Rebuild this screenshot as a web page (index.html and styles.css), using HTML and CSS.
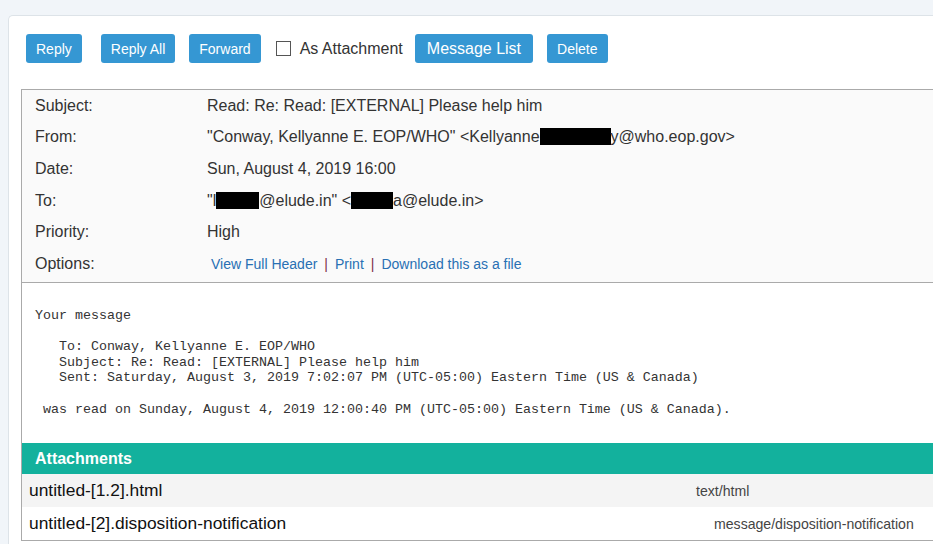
FILE: index.html
```html
<!DOCTYPE html>
<html lang="en">
<head>
  <meta charset="UTF-8" />
  <title>Read: Re: Read: [EXTERNAL] Please help him</title>
  <link rel="stylesheet" href="styles.css">
</head>
<body>
  <div class="panel">
    <div class="toolbar">
      <button class="btn reply">Reply</button>
      <button class="btn reply-all">Reply All</button>
      <button class="btn forward">Forward</button>
      <label class="attach-opt">
        <input type="checkbox" />
        <span>As Attachment</span>
      </label>
      <button class="btn big">Message List</button>
      <button class="btn">Delete</button>
    </div>

    <div class="message">
      <div class="headers">
        <div class="label">Subject:</div>
        <div class="value">Read: Re: Read: [EXTERNAL] Please help him</div>

        <div class="label">From:</div>
        <div class="value">"Conway, Kellyanne E. EOP/WHO" &lt;Kellyanne<span class="redact w71"></span>y@who.eop.gov&gt;</div>

        <div class="label">Date:</div>
        <div class="value">Sun, August 4, 2019 16:00</div>

        <div class="label">To:</div>
        <div class="value">"l<span class="redact w43"></span>@elude.in" &lt;<span class="redact w42"></span>a@elude.in&gt;</div>

        <div class="label">Priority:</div>
        <div class="value">High</div>

        <div class="label">Options:</div>
        <div class="value options">
          <a href="#">View Full Header</a><span class="sep">|</span><a href="#">Print</a><span class="sep">|</span><a href="#">Download this as a file</a>
        </div>
      </div>

      <pre class="body">Your message

   To: Conway, Kellyanne E. EOP/WHO
   Subject: Re: Read: [EXTERNAL] Please help him
   Sent: Saturday, August 3, 2019 7:02:07 PM (UTC-05:00) Eastern Time (US &amp; Canada)

 was read on Sunday, August 4, 2019 12:00:40 PM (UTC-05:00) Eastern Time (US &amp; Canada).</pre>

      <div class="attachments">
        <div class="attach-head">Attachments</div>
        <div class="attach-row shaded">
          <span class="fname">untitled-[1.2].html</span>
          <span class="ftype">text/html</span>
        </div>
        <div class="attach-row notif">
          <span class="fname">untitled-[2].disposition-notification</span>
          <span class="ftype">message/disposition-notification</span>
        </div>
      </div>
    </div>
  </div>
</body>
</html>
```

FILE: styles.css
```css
body {
  margin: 0;
  background: #f1f5f9;
  font-family: "Liberation Sans", Arial, sans-serif;
  color: #333;
  overflow: hidden;
  height: 100vh;
}
.panel {
  margin: 15px 0 0 8px;
  height: calc(100vh - 15px);
  background: #fff;
  border: 1px solid #dde3e8;
  border-right: none;
  border-bottom: none;
  border-radius: 5px 0 0 0;
  padding: 18px 0 0 12px;
  box-sizing: border-box;
  overflow: hidden;
}
.toolbar {
  display: flex;
  align-items: center;
  padding-left: 5px;
  height: 29px;
}
.btn {
  height: 29px;
  padding: 0 10px;
  background: #3597d3;
  color: #fff;
  border: none;
  border-radius: 3px;
  font-family: "Liberation Sans", Arial, sans-serif;
  font-size: 14px;
  margin-right: 14px;
  cursor: pointer;
}
.btn.big {
  font-size: 16px;
  padding: 0 12px;
}
.btn.reply {
  margin-right: 19px;
}
.btn.forward {
  margin-right: 15px;
}
.attach-opt {
  display: flex;
  align-items: center;
  font-size: 16px;
  color: #333;
  margin-right: 12px;
}
.attach-opt input {
  appearance: none;
  width: 15px;
  height: 15px;
  margin: 0 9px 0 0;
  border: 1px solid #555;
  background: #fff;
}
.message {
  margin-top: 26px;
  border: 1px solid #aaa;
  border-right: none;
}
.headers {
  display: grid;
  grid-template-columns: 185px 1fr;
  grid-auto-rows: 31.6px;
  align-items: center;
  background: #fafafa;
  padding-bottom: 2px;
  border-bottom: 1px solid #aaa;
  font-size: 16px;
}
.label {
  padding-left: 13px;
}
.redact {
  display: inline-block;
  height: 17px;
  background: #000;
  vertical-align: -3px;
}
.w71 { width: 71px; }
.w43 { width: 43px; }
.w42 { width: 42px; }
.options {
  font-size: 14px;
  padding-left: 4px;
}
.options a {
  color: #2870b4;
  text-decoration: none;
}
.sep {
  color: #7d3046;
  margin: 0 7px;
}
.body {
  margin: 0;
  padding: 25px 13px 26px;
  font-family: "Liberation Mono", "Courier New", monospace;
  font-size: 13.33px;
  line-height: 15.7px;
  color: #333;
  background: #fff;
}
.attach-head {
  background: #13b19d;
  color: #fff;
  font-weight: bold;
  font-size: 16px;
  height: 31px;
  line-height: 31px;
  padding-left: 13px;
}
.attach-row {
  display: grid;
  grid-template-columns: 667px 1fr;
  align-items: center;
  height: 33px;
  padding-left: 7px;
}
.attach-row.shaded {
  background: #f4f4f4;
}
.attach-row.notif {
  grid-template-columns: 685px 1fr;
}
.fname {
  font-size: 17.4px;
  color: #111;
}
.ftype {
  font-size: 14.1px;
  color: #444;
}
```
